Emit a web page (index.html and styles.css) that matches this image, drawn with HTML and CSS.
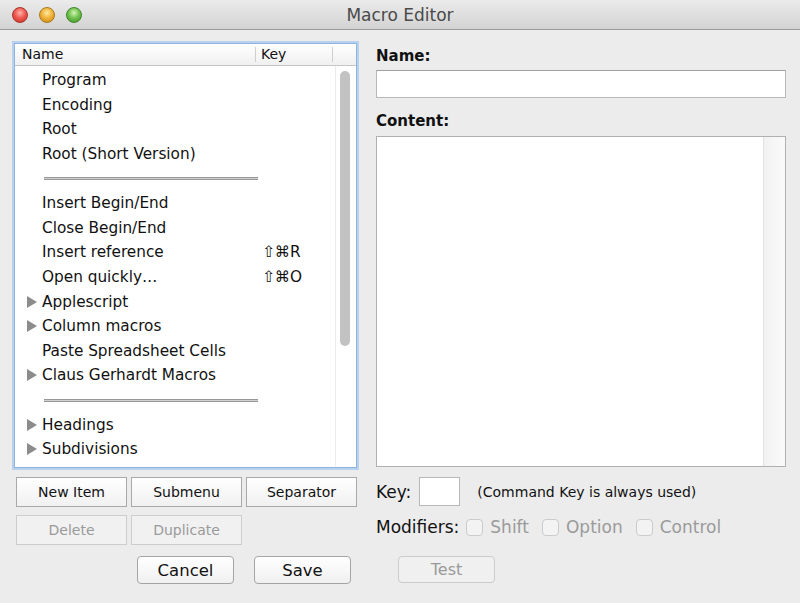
FILE: index.html
```html
<!DOCTYPE html>
<html lang="en">

<head>
    <meta charset="UTF-8">
    <title>Macro Editor</title>
    <link rel="stylesheet" href="styles.css">
</head>

<body>
    <div class="window">
        <!-- title bar -->
        <div class="titlebar">
            <div class="lights">
                <span class="light red"></span>
                <span class="light yellow"></span>
                <span class="light green"></span>
            </div>
            <div class="title">Macro Editor</div>
            <div></div>
        </div>

        <div class="main">
            <!-- left: macro tree -->
            <div class="left">
                <div class="list">
                    <div class="list-head">
                        <div class="col-name">Name</div>
                        <div class="col-key">Key</div>
                        <div class="col-corner"></div>
                    </div>
                    <div class="list-body">
                        <div class="rows">
                            <div class="row"><span class="toggle"></span><span class="name">Program</span></div>
                            <div class="row"><span class="toggle"></span><span class="name">Encoding</span></div>
                            <div class="row"><span class="toggle"></span><span class="name">Root</span></div>
                            <div class="row"><span class="toggle"></span><span class="name">Root (Short Version)</span></div>
                            <div class="row sep"><span class="sep-line"></span></div>
                            <div class="row"><span class="toggle"></span><span class="name">Insert Begin/End</span></div>
                            <div class="row"><span class="toggle"></span><span class="name">Close Begin/End</span></div>
                            <div class="row"><span class="toggle"></span><span class="name">Insert reference</span><span class="key">⇧⌘R</span></div>
                            <div class="row"><span class="toggle"></span><span class="name">Open quickly…</span><span class="key">⇧⌘O</span></div>
                            <div class="row"><span class="toggle closed"></span><span class="name">Applescript</span></div>
                            <div class="row"><span class="toggle closed"></span><span class="name">Column macros</span></div>
                            <div class="row"><span class="toggle"></span><span class="name">Paste Spreadsheet Cells</span></div>
                            <div class="row"><span class="toggle closed"></span><span class="name">Claus Gerhardt Macros</span></div>
                            <div class="row sep"><span class="sep-line"></span></div>
                            <div class="row"><span class="toggle closed"></span><span class="name">Headings</span></div>
                            <div class="row"><span class="toggle closed"></span><span class="name">Subdivisions</span></div>
                        </div>
                        <div class="vscroll">
                            <div class="thumb"></div>
                        </div>
                    </div>
                </div>

                <div class="btn-row">
                    <button class="btn">New Item</button>
                    <button class="btn">Submenu</button>
                    <button class="btn">Separator</button>
                </div>
                <div class="btn-row second">
                    <button class="btn" disabled>Delete</button>
                    <button class="btn" disabled>Duplicate</button>
                </div>
                <div class="push-row">
                    <button class="push">Cancel</button>
                    <button class="push">Save</button>
                </div>
            </div>

            <!-- right: editor fields -->
            <div class="right">
                <div class="label first">Name:</div>
                <div class="field"></div>
                <div class="label">Content:</div>
                <div class="content-box">
                    <div class="content-text"></div>
                    <div class="content-track"></div>
                </div>
                <div class="key-row">
                    <span class="big">Key:</span>
                    <span class="key-box"></span>
                    <span class="hint">(Command Key is always used)</span>
                </div>
                <div class="mod-row">
                    <span class="big">Modifiers:</span>
                    <span class="check first"></span><span class="check-label">Shift</span>
                    <span class="check"></span><span class="check-label">Option</span>
                    <span class="check"></span><span class="check-label">Control</span>
                </div>
                <button class="push test" disabled>Test</button>
            </div>
        </div>
    </div>
</body>

</html>
```

FILE: styles.css
```css
body {
    margin: 0;
    padding: 0;
    font-family: "DejaVu Sans", "Liberation Sans", sans-serif;
    color: #111;
    background: #ececec;
}

.window {
    width: 800px;
    height: 603px;
    background: #ececec;
    overflow: hidden;
}

/* title bar */
.titlebar {
    height: 29px;
    display: grid;
    grid-template-columns: 1fr auto 1fr;
    align-items: center;
    background: linear-gradient(#ebebeb, #d3d3d3);
    border-bottom: 1px solid #9a9a9a;
}

.lights {
    display: flex;
    gap: 11px;
    padding-left: 12px;
}

.light {
    width: 16px;
    height: 16px;
    border-radius: 50%;
    box-sizing: border-box;
}

.red {
    background: radial-gradient(circle at 50% 35%, #ffb3ad 0, #ee5a50 45%, #c42d22 100%);
    border: 1px solid #a8352c;
}

.yellow {
    background: radial-gradient(circle at 50% 35%, #ffe9a6 0, #f0b43a 45%, #c88414 100%);
    border: 1px solid #a7781e;
}

.green {
    background: radial-gradient(circle at 50% 35%, #d4f5b4 0, #72c350 45%, #3f9024 100%);
    border: 1px solid #3e8527;
}

.title {
    font-size: 17px;
    color: #4a4a4a;
    padding-top: 1px;
}

/* main area */
.main {
    display: flex;
    padding: 13px 14px 0 14px;
}

.left {
    width: 343px;
}

.list {
    height: 425px;
    box-sizing: border-box;
    border: 1px solid #8eb3dc;
    box-shadow: 0 0 0 2px #b7d1ee;
    background: #fff;
    display: flex;
    flex-direction: column;
}

.list-head {
    height: 21px;
    display: flex;
    align-items: center;
    font-size: 14px;
    background: linear-gradient(#ffffff, #f0f0f0);
    border-bottom: 1px solid #c5c5c5;
}

.col-name {
    width: 233px;
    padding-left: 7px;
    border-right: 1px solid #cfcfcf;
    line-height: 15px;
}

.col-key {
    width: 71px;
    padding-left: 5px;
    border-right: 1px solid #cfcfcf;
    line-height: 15px;
}

.col-corner {
    flex: 1;
}

.list-body {
    flex: 1;
    display: flex;
}

.rows {
    flex: 1;
    padding-top: 2px;
}

.row {
    height: 24.6px;
    display: flex;
    align-items: center;
    font-size: 15.3px;
    padding-left: 13px;
}

.toggle {
    width: 14px;
    height: 10px;
    flex: none;
}

.toggle.closed {
    width: 0;
    height: 0;
    margin-left: -1px;
    margin-right: 5px;
    border-left: 10px solid #8c8c8c;
    border-top: 6px solid transparent;
    border-bottom: 6px solid transparent;
}

.name {
    width: 220px;
    white-space: nowrap;
}

.key {
    white-space: nowrap;
}

.row.sep {
    padding-left: 29px;
}

.sep-line {
    width: 214px;
    height: 1px;
    background: #d0d0d0;
    border-top: 1px solid #989898;
    border-bottom: 1px solid #989898;
}

.vscroll {
    width: 20px;
    border-left: 1px solid #ececec;
    padding-top: 5px;
}

.thumb {
    width: 10px;
    height: 275px;
    margin-left: 4px;
    border-radius: 5px;
    background: #c2c2c2;
}

/* small rectangular buttons */
.btn-row {
    display: flex;
    gap: 4px;
    margin-top: 9px;
    padding-left: 2px;
}

.btn-row.second {
    margin-top: 8px;
}

.btn {
    width: 111px;
    height: 30px;
    font-family: inherit;
    font-size: 14px;
    color: #111;
    background: linear-gradient(#ffffff, #f1f1f1);
    border: 1px solid #a9a9a9;
    border-radius: 0;
    padding: 0;
}

.btn:disabled {
    color: #9a9a9a;
    border-color: #cdcdcd;
    background: #f1f1f1;
}

/* rounded push buttons */
.push-row {
    display: flex;
    gap: 20px;
    margin-top: 11px;
    padding-left: 123px;
}

.push {
    width: 97px;
    height: 28px;
    font-family: inherit;
    font-size: 16.5px;
    color: #111;
    background: linear-gradient(#ffffff, #f0f0f0);
    border: 1px solid #a5a5a5;
    border-radius: 4px;
    padding: 0;
}

/* right side */
.right {
    width: 410px;
    margin-left: 19px;
    display: flex;
    flex-direction: column;
}

.label {
    font-size: 15px;
    font-weight: bold;
    line-height: 20px;
    margin-top: 13px;
}

.label.first {
    margin-top: 3px;
}

.field {
    height: 28px;
    margin-top: 4px;
    box-sizing: border-box;
    background: #fff;
    border: 1px solid #b8b8b8;
    border-top-color: #a0a0a0;
}

.content-box {
    height: 331px;
    margin-top: 5px;
    box-sizing: border-box;
    background: #fff;
    border: 1px solid #b0b0b0;
    display: flex;
}

.content-text {
    flex: 1;
}

.content-track {
    width: 21px;
    border-left: 1px solid #e2e2e2;
    background: linear-gradient(90deg, #f2f2f2, #fafafa);
}

.key-row {
    display: flex;
    align-items: center;
    margin-top: 10px;
    height: 29px;
}

.big {
    font-size: 17px;
}

.key-box {
    width: 41px;
    height: 29px;
    box-sizing: border-box;
    margin-left: 8px;
    background: #fff;
    border: 1px solid #b8b8b8;
}

.hint {
    font-size: 14px;
    margin-left: 17px;
}

.mod-row {
    display: flex;
    align-items: center;
    margin-top: 11px;
    height: 20px;
}

.check {
    width: 17px;
    height: 17px;
    box-sizing: border-box;
    border: 1px solid #cbcbcb;
    border-radius: 4px;
    background: #f3f3f3;
    margin-left: 13px;
    margin-right: 7px;
}

.check.first {
    margin-left: 7px;
}

.check-label {
    font-size: 17px;
    color: #9a9a9a;
}

.push.test {
    margin-top: 19px;
    margin-left: 22px;
    height: 27px;
    font-size: 16px;
    color: #9a9a9a;
    border-color: #cbcbcb;
    background: #f0f0f0;
}
```
